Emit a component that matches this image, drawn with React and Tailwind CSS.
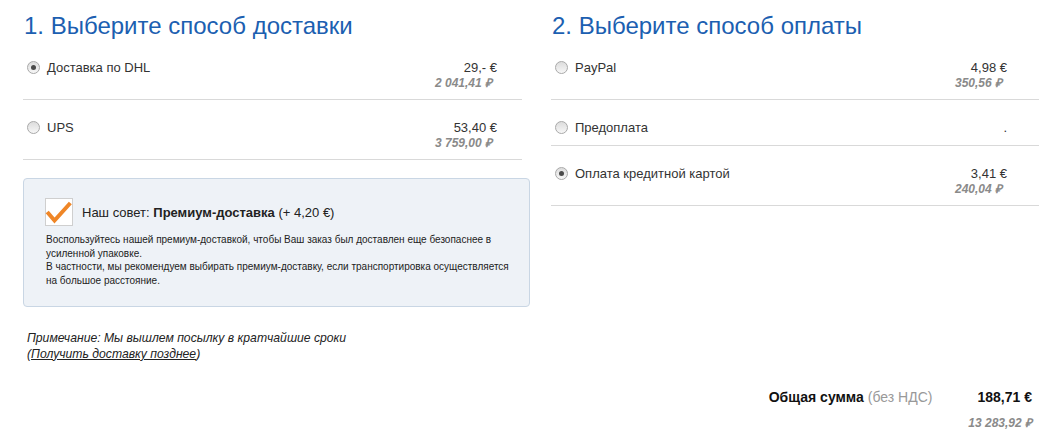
import React from "react";

const font = { fontFamily: '"Liberation Sans", Arial, sans-serif' };

function Radio({ checked }) {
  return (
    <span className="relative inline-block h-[13px] w-[13px] shrink-0 rounded-full border border-[#a9a9a9] bg-gradient-to-b from-[#dcdcdc] to-[#f7f7f7]">
      {checked && (
        <span className="absolute left-[3px] top-[3px] h-[5px] w-[5px] rounded-full bg-[#4a4a4a]" />
      )}
    </span>
  );
}

function Row({ label, checked, eur, rub, pr }) {
  return (
    <div className="flex justify-between border-b border-[#d9d9d9] pt-[19px] pb-[9px]">
      <div className="flex h-[17px] items-center gap-[7px] pl-[4px]">
        <Radio checked={checked} />
        <span className="text-[13px] leading-[17px] text-[#333]">{label}</span>
      </div>
      <div className={`flex flex-col items-end ${pr}`}>
        <span className="text-[13px] leading-[17px] text-[#333]">{eur}</span>
        {rub && (
          <span className="pr-[5px] text-[12px] font-bold italic leading-[14px] text-[#8a8a8a]">
            {rub}
          </span>
        )}
      </div>
    </div>
  );
}

export default function App() {
  return (
    <div className="min-h-[438px] bg-white pl-[23px]" style={font}>
      <div className="flex gap-[21px]">
        {/* Left column */}
        <div className="w-[507px]">
          <h1 className="pt-[11px] pl-[1px] text-[24px] font-normal leading-[29px] text-[#1c5fb1]">
            1. Выберите способ доставки
          </h1>
          <div className="mr-[8px]">
            <Row label="Доставка по DHL" checked eur="29,- €" rub="2 041,41 ₽" pr="pr-[25px]" />
            <Row label="UPS" eur="53,40 €" rub="3 759,00 ₽" pr="pr-[25px]" />
          </div>
          <div className="mt-[18px] rounded-[4px] border border-[#c9d6e4] bg-[#eef2f7] pt-[19px] pb-[18px] pl-[21px] pr-[12px]">
            <div className="flex items-center gap-[9px]">
              <span className="flex h-[28px] w-[28px] items-center justify-center border border-[#cfcfcf] bg-white">
                <svg width="28" height="28" viewBox="0 0 28 28" className="overflow-visible">
                  <path
                    d="M3.5 15.5 L9.5 22.5 L24 6.5"
                    fill="none"
                    stroke="#ef8627"
                    strokeWidth="4"
                    strokeLinecap="square"
                  />
                </svg>
              </span>
              <span className="text-[13px] leading-[17px] text-[#222]">
                Наш совет: <b>Премиум-доставка</b> (+ 4,20 €)
              </span>
            </div>
            <div className="mt-[7px] pl-[1px] text-[10px] leading-[13.7px] text-[#222]">
              <div>Воспользуйтесь нашей премиум-доставкой, чтобы Ваш заказ был доставлен еще безопаснее в</div>
              <div>усиленной упаковке.</div>
              <div>В частности, мы рекомендуем выбирать премиум-доставку, если транспортировка осуществляется</div>
              <div>на большое расстояние.</div>
            </div>
          </div>
          <div className="mt-[23px] pl-[4px] text-[12.2px] italic leading-[16px] text-[#222]">
            <div>Примечание: Мы вышлем посылку в кратчайшие сроки</div>
            <div>
              (<span className="underline">Получить доставку позднее</span>)
            </div>
          </div>
        </div>

        {/* Right column */}
        <div className="w-[488px]">
          <h1 className="pt-[11px] pl-[1px] text-[24px] font-normal leading-[29px] text-[#1c5fb1]">
            2. Выберите способ оплаты
          </h1>
          <Row label="PayPal" eur="4,98 €" rub="350,56 ₽" pr="pr-[32px]" />
          <Row label="Предоплата" eur="." pr="pr-[32px]" />
          <Row label="Оплата кредитной картой" checked eur="3,41 €" rub="240,04 ₽" pr="pr-[32px]" />
        </div>
      </div>

      {/* Total */}
      <div className="mt-[27px] flex justify-end pr-[21px]">
        <div className="flex flex-col items-end">
          <div className="flex items-center text-[14px] leading-[17px]">
            <span className="font-bold text-[#111]">Общая сумма</span>
            <span className="ml-[4px] text-[#999]">(без НДС)</span>
            <span className="ml-[45px] font-bold text-[#111]">188,71 €</span>
          </div>
          <span className="mt-[10px] text-[12px] font-bold italic leading-[14px] text-[#8a8a8a]">
            13 283,92 ₽
          </span>
        </div>
      </div>
    </div>
  );
}
